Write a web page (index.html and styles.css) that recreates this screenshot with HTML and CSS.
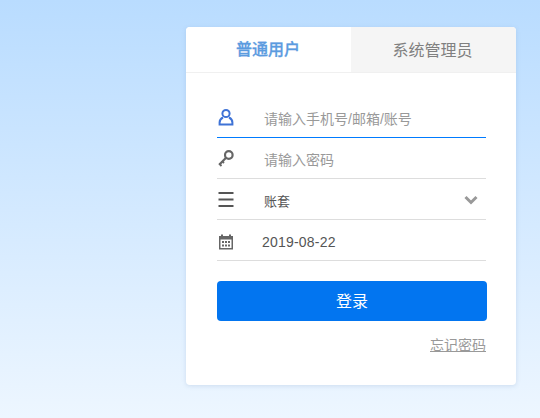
FILE: index.html
```html
<!DOCTYPE html>
<html lang="zh-CN">
<head>
    <meta charset="UTF-8">
    <title>登录</title>
    <link rel="stylesheet" href="styles.css">
</head>
<body>
    <div class="card">
        <div class="tabs">
            <div class="tab active">普通用户</div>
            <div class="tab">系统管理员</div>
        </div>
        <form class="form">
            <div class="row focus">
                <svg class="icon" viewBox="0 0 18 18" width="18" height="18" fill="none" stroke="#3f73d6" stroke-width="2">
                    <circle cx="9" cy="5.5" r="3.6"/>
                    <path d="M6 9.500C3.800 10.500 2.600 12.400 2.600 14.600V16.400H15.400V14.600C15.400 12.400 14.200 10.500 12 9.500"/>
                </svg>
                <span class="placeholder">请输入手机号/邮箱/账号</span>
            </div>
            <div class="row">
                <svg class="icon" viewBox="0 0 18 18" width="18" height="18" fill="none" stroke="#666" stroke-width="2.200">
                    <circle cx="11.800" cy="6" r="3.800"/>
                    <path d="M8.800 9L2.500 15.500"/>
                    <path d="M2 14.500L4.500 17M5 12L7 14" stroke-width="1.800"/>
                </svg>
                <span class="placeholder">请输入密码</span>
            </div>
            <div class="row">
                <svg class="icon" viewBox="0 0 18 18" width="18" height="18" fill="none" stroke="#555" stroke-width="2">
                    <path d="M1.500 3H16.500M1.500 9.500H16.500M1.500 16H16.500"/>
                </svg>
                <span class="value">账套</span>
                <svg class="arrow" viewBox="0 0 14 10" width="14" height="10" fill="none" stroke="#999" stroke-width="3">
                    <path d="M1.500 2L7 7.500L12.500 2"/>
                </svg>
            </div>
            <div class="row">
                <svg class="icon calendar" viewBox="0 0 18 18" width="18" height="18">
                    <path fill="#666" d="M2 3H4V1.500H6V3H12V1.500H14V3H16V16.500H2ZM3.500 6.500V15H14.500V6.500Z"/>
                    <path fill="#666" d="M5 8H7V10H5ZM8 8H10V10H8ZM11 8H13V10H11ZM5 11.500H7V13.500H5ZM8 11.500H10V13.500H8ZM11 11.500H13V13.500H11Z"/>
                </svg>
                <span class="date">2019-08-22</span>
            </div>
            <button class="login" type="button">登录</button>
            <div class="links"><a class="forget" href="#">忘记密码</a></div>
        </form>
    </div>
</body>
</html>
```

FILE: styles.css
```css
html, body {
    height: 100%;
}
body {
    margin: 0;
    padding: 27px 0 0 186px;
    box-sizing: border-box;
    background: linear-gradient(180deg, #b9dcff 0%, #edf6ff 100%);
    font-family: "Liberation Sans", "Noto Sans CJK SC", sans-serif;
    overflow: hidden;
}
.card {
    width: 330px;
    height: 358px;
    background-color: #fff;
    border-radius: 4px;
    box-shadow: 0 1px 4px rgba(120, 150, 190, 0.25);
    overflow: hidden;
}
.tabs {
    display: flex;
    height: 46px;
    border-bottom: 1px solid #f0f0f0;
    box-sizing: border-box;
}
.tab {
    flex: 1;
    display: flex;
    align-items: center;
    justify-content: center;
    padding: 0 2px 2px 0;
    background-color: #f5f5f5;
    color: #808080;
    font-size: 16px;
}
.tab.active {
    flex: 0 0 165px;
    padding: 0 1px 4px 0;
    box-sizing: border-box;
    background-color: #fff;
    color: #5b9bdf;
    font-weight: 500;
    -webkit-text-stroke: 0.3px #5b9bdf;
}
.form {
    display: flex;
    flex-direction: column;
    padding: 24px 29px 0 31px;
}
.row {
    display: flex;
    align-items: center;
    height: 41px;
    margin-right: 1px;
    box-sizing: border-box;
    border-bottom: 1px solid #ddd;
    font-size: 14px;
}
.row.focus {
    border-bottom-color: #007bff;
}
.icon {
    margin-right: 29px;
    flex: none;
}
.calendar {
    margin-top: 3px;
}
.placeholder {
    padding-top: 2px;
    color: #999;
}
.value {
    flex: 1;
    padding-top: 3px;
    color: #555;
    font-size: 13px;
}
.date {
    margin-left: -2px;
    padding-top: 3px;
    color: #555;
    letter-spacing: 0.2px;
}
.arrow {
    margin-right: 8px;
    margin-top: 1px;
}
.login {
    height: 40px;
    margin-top: 20px;
    padding-bottom: 3px;
    border: none;
    border-radius: 4px;
    background-color: #0275f0;
    color: #fff;
    font-family: inherit;
    font-size: 16px;
}
.links {
    display: flex;
    justify-content: flex-end;
    margin-top: 13px;
    margin-right: 1px;
}
.forget {
    color: #999;
    font-size: 14px;
}
```
